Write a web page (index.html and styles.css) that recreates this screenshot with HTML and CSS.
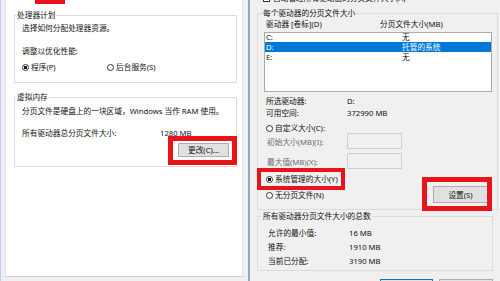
FILE: index.html
```html
<!DOCTYPE html>
<html lang="zh-CN">
<head>
<meta charset="UTF-8">
<title>虚拟内存</title>
<link rel="stylesheet" href="styles.css">
</head>
<body>
<div class="screen">
  <div class="win-left">
    <div class="tabpage">
      <fieldset class="group g-cpu">
        <legend>处理器计划</legend>
        <div class="line cpu-1">选择如何分配处理器资源。</div>
        <div class="line cpu-2">调整以优化性能:</div>
        <div class="line cpu-3">
          <span class="radio"><span class="dot on"></span>程序(P)</span>
          <span class="radio r-service"><span class="dot"></span>后台服务(S)</span>
        </div>
      </fieldset>
      <fieldset class="group g-vm">
        <legend>虚拟内存</legend>
        <div class="line vm-1">分页文件是硬盘上的一块区域，Windows 当作 RAM 使用。</div>
        <div class="line vm-2"><span class="vm-label">所有驱动器总分页文件大小:</span><span>1280 MB</span></div>
        <div class="vm-3"><button class="btn btn-change">更改(C)...</button></div>
      </fieldset>
    </div>
  </div>

  <div class="win-right">
    <div class="line auto-row"><span class="check"></span>自动管理所有驱动器的分页文件大小(A)</div>
    <fieldset class="group g-drive">
      <legend>每个驱动器的分页文件大小</legend>
      <div class="line list-head"><span class="col-a">驱动器 [卷标](D)</span><span>分页文件大小(MB)</span></div>
      <div class="drive-list">
        <div class="drive"><span class="col-b">C:</span><span>无</span></div>
        <div class="drive selected"><span class="col-b">D:</span><span>托管的系统</span></div>
        <div class="drive"><span class="col-b">E:</span><span>无</span></div>
      </div>
      <div class="line info info-1"><span class="info-label">所选驱动器:</span><span>D:</span></div>
      <div class="line info info-2"><span class="info-label">可用空间:</span><span>372990 MB</span></div>
      <div class="line opt opt-custom"><span class="dot"></span>自定义大小(C):</div>
      <div class="size-row size-init"><span class="size-label">初始大小(MB)(I):</span><span class="field"></span></div>
      <div class="size-row size-max"><span class="size-label">最大值(MB)(X):</span><span class="field"></span></div>
      <div class="line opt opt-system"><span class="dot on"></span>系统管理的大小(Y)</div>
      <div class="opt-none">
        <span class="opt"><span class="dot"></span>无分页文件(N)</span>
        <button class="btn btn-set">设置(S)</button>
      </div>
    </fieldset>
    <fieldset class="group g-total">
      <legend>所有驱动器分页文件大小的总数</legend>
      <div class="line total total-1"><span class="total-label">允许的最小值:</span><span>16 MB</span></div>
      <div class="line total"><span class="total-label">推荐:</span><span>1910 MB</span></div>
      <div class="line total"><span class="total-label">当前已分配:</span><span>3190 MB</span></div>
    </fieldset>
    <div class="actions">
      <button class="btn btn-ok" aria-label="确定"></button>
      <button class="btn btn-cancel" aria-label="取消"></button>
    </div>
  </div>

  <div class="mark mark-tab"></div>
  <div class="mark mark-change"></div>
  <div class="mark mark-system"></div>
  <div class="mark mark-set"></div>
</div>
</body>
</html>
```

FILE: styles.css
```css
html, body {
  margin: 0;
  height: 100%;
  overflow: hidden;
  background: #f0f0f0;
}

.screen {
  position: relative;
  display: flex;
  width: 500px;
  height: 281px;
  overflow: hidden;
  font-family: "Noto Sans", "Noto Sans CJK SC", sans-serif;
  font-size: 7.7px;
  color: #111;
}

.line {
  height: 10px;
  line-height: 10px;
  white-space: nowrap;
}

/* 分组框 */
.group {
  margin: 0;
  padding: 0;
  border: 1px solid #dcdcdc;
  min-width: 0;
  box-sizing: border-box;
}

.group legend {
  margin-left: 4px;
  padding: 0 1px;
  line-height: 10px;
  height: 10px;
  white-space: nowrap;
}

/* 单选框 */
.dot {
  display: inline-block;
  box-sizing: border-box;
  width: 7px;
  height: 7px;
  margin-right: 2px;
  border: 1px solid #333;
  border-radius: 50%;
  background: #fff;
  vertical-align: -1px;
}

.dot.on {
  background: radial-gradient(circle, #1a1a1a 0 1.6px, #fff 1.9px);
}

.btn {
  box-sizing: border-box;
  height: 14px;
  padding: 0;
  border: 1px solid #adadad;
  background: #e1e1e1;
  font: inherit;
  color: #111;
  line-height: 12px;
}

/* 左边窗口：性能选项 */
.win-left {
  width: 250px;
  box-sizing: border-box;
  border-left: 1px solid #b9d1ea;
  border-right: 2px solid #8ea7c2;
  background: #f0f0f0;
}

.tabpage {
  width: 238px;
  height: 277px;
  margin-left: 4px;
  padding-top: 10px;
  box-sizing: border-box;
  background: #fff;
  border-left: 1px solid #eadede;
  border-right: 1px solid #e3e3e3;
  border-bottom: 1px solid #d2d2d2;
}

.win-left .group {
  width: 223px;
  margin-left: 8px;
  padding: 0 7px;
}

.win-left .group legend {
  margin-left: -6px;
}

.g-cpu {
  padding-bottom: 10px !important;
}

.cpu-1 { margin-top: 3px; }
.cpu-2 { margin-top: 13px; }
.cpu-3 { margin-top: 6px; display: flex; }

.radio {
  display: inline-block;
  width: 85px;
}

.g-vm {
  margin-top: 9px;
  padding-bottom: 9px !important;
}

.vm-1 { margin-top: 4px; }
.vm-2 { margin-top: 12px; display: flex; }

.vm-label {
  width: 138px;
}

.vm-3 {
  display: flex;
  justify-content: flex-end;
  margin-top: 5px;
}

.btn-change {
  width: 51px;
}

/* 右边窗口：虚拟内存 */
.win-right {
  width: 250px;
  background: #f0f0f0;
}

.auto-row {
  margin-top: -7px;
  padding-left: 13px;
}

.check {
  display: inline-block;
  box-sizing: border-box;
  width: 7px;
  height: 7px;
  margin-right: 3px;
  border: 1px solid #333;
  background: #fff;
  vertical-align: -1px;
}

.g-drive {
  width: 241px;
  margin: 5px 0 0 7px;
  padding-bottom: 6px;
}

.list-head {
  display: flex;
  margin-top: 1px;
  padding-left: 8px;
}

.col-a {
  width: 114px;
}

.drive-list {
  width: 228px;
  height: 60px;
  margin: 3px 0 0 6px;
  box-sizing: border-box;
  border: 1px solid #a9a9a9;
  background: #fff;
}

.drive {
  display: flex;
  height: 10px;
  line-height: 10px;
  padding-left: 1px;
}

.drive:first-child {
  height: 9px;
  line-height: 9px;
}

.drive.selected {
  background: #0078d7;
  color: #fff;
}

.col-b {
  width: 136px;
}

.info {
  display: flex;
  padding-left: 8px;
}

.info-1 { margin-top: 4px; }
.info-2 { margin-top: 2px; }

.info-label {
  width: 81px;
}

.opt {
  padding-left: 8px;
  white-space: nowrap;
}

.opt-custom { margin-top: 5px; }
.opt-system { margin-top: 5px; }

.size-row {
  display: flex;
  align-items: center;
  height: 16px;
  padding-left: 9px;
  color: #6d6d6d;
}

.size-max {
  margin-top: 4px;
}

.size-label {
  width: 80px;
}

.field {
  box-sizing: border-box;
  width: 55px;
  height: 16px;
  border: 1px solid #cfcfcf;
  background: #f0f0f0;
}

.opt-none {
  display: flex;
  align-items: center;
  justify-content: space-between;
  height: 17px;
  margin-top: 2px;
  padding-right: 9px;
  line-height: 10px;
}

.btn-set {
  width: 55px;
  height: 17px;
}

.g-total {
  width: 236px;
  margin: 1px 0 0 7px;
  padding-bottom: 4px;
}

.total {
  display: flex;
  margin-top: 4px;
  padding-left: 10px;
}

.total-1 { margin-top: 7px; }

.total-label {
  width: 81px;
}

.actions {
  display: flex;
  justify-content: flex-end;
  gap: 6px;
  margin-top: 8px;
  padding-right: 7px;
}

.btn-ok {
  width: 53px;
  border-color: #0078d7;
}

.btn-cancel {
  width: 54px;
}

/* 红色标注框 */
.mark {
  position: absolute;
  box-sizing: border-box;
  border: 5px solid #e8141c;
}

.mark-tab {
  left: 35px;
  top: -6px;
  width: 30px;
  height: 10px;
  background: #e8141c;
}

.mark-change {
  left: 168px;
  top: 136px;
  width: 69px;
  height: 29px;
}

.mark-system {
  left: 257px;
  top: 168px;
  width: 88px;
  height: 22px;
  border-width: 4px;
}

.mark-set {
  left: 422px;
  top: 177px;
  width: 70px;
  height: 34px;
}
```
